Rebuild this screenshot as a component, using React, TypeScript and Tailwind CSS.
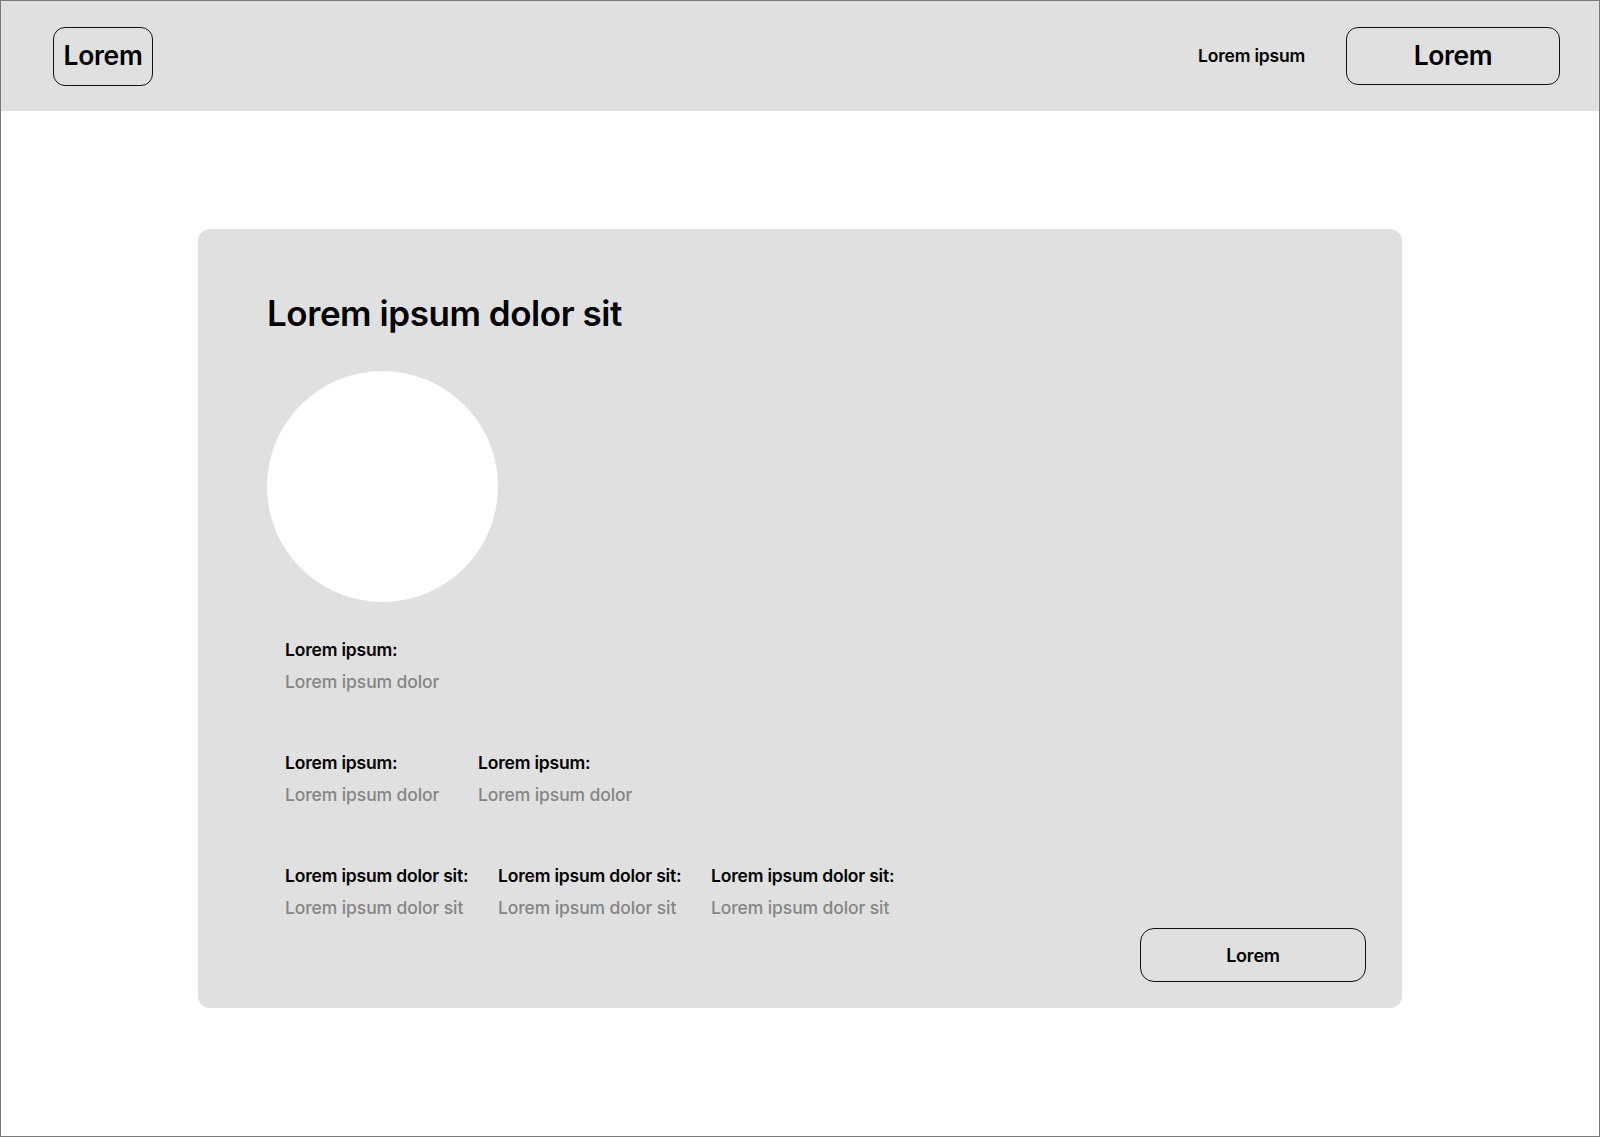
import React from "react";

const font = { fontFamily: "Inter, 'Noto Sans', sans-serif" };

function Field({ label, value, w }: { label: string; value: string; w: string }) {
  return (
    <div className={`flex flex-col gap-[12px] ${w}`}>
      <div className="text-[17.5px] leading-[20px] font-semibold text-black tracking-[-0.2px] whitespace-nowrap">{label}</div>
      <div className="text-[17.5px] leading-[20px] font-medium text-[#858585] tracking-[-0.1px] whitespace-nowrap">{value}</div>
    </div>
  );
}

export default function App() {
  return (
    <div style={font} className="w-[1600px] h-[1137px] border border-[#7a7a7a] bg-white flex flex-col text-black">
      <header className="h-[110px] bg-[#e0e0e0] flex items-center justify-between pl-[52px] pr-[39px] shrink-0">
        <div className="w-[100px] h-[59px] border border-[#111] rounded-[12px] flex items-center justify-center text-[26.5px] font-semibold tracking-[-0.3px]">
          Lorem
        </div>
        <div className="flex items-center gap-[41px]">
          <span className="text-[17.5px] font-semibold tracking-[-0.2px]">Lorem ipsum</span>
          <div className="w-[214px] h-[58px] border border-[#111] rounded-[12px] flex items-center justify-center text-[26.5px] font-semibold tracking-[-0.4px]">
            Lorem
          </div>
        </div>
      </header>
      <main className="flex-1 flex justify-center pt-[118px]">
        <section className="w-[1204px] h-[779px] bg-[#e0e0e0] rounded-[12px] pt-[66px] pl-[69px] pr-[36px] pb-[26px] flex flex-col">
          <h1 className="text-[35px] leading-[36px] font-semibold tracking-[-0.45px]">Lorem ipsum dolor sit</h1>
          <div className="mt-[40px] w-[231px] h-[231px] rounded-full bg-white" />
          <div className="mt-[38px] ml-[18px] flex flex-col">
            <div className="flex">
              <Field label="Lorem ipsum:" value="Lorem ipsum dolor" w="w-[193px]" />
            </div>
            <div className="flex mt-[61px]">
              <Field label="Lorem ipsum:" value="Lorem ipsum dolor" w="w-[193px]" />
              <Field label="Lorem ipsum:" value="Lorem ipsum dolor" w="w-[193px]" />
            </div>
            <div className="flex mt-[61px]">
              <Field label="Lorem ipsum dolor sit:" value="Lorem ipsum dolor sit" w="w-[213px]" />
              <Field label="Lorem ipsum dolor sit:" value="Lorem ipsum dolor sit" w="w-[213px]" />
              <Field label="Lorem ipsum dolor sit:" value="Lorem ipsum dolor sit" w="w-[213px]" />
            </div>
          </div>
          <div className="mt-[10px] flex justify-end">
            <div className="w-[226px] h-[54px] border border-[#111] rounded-[14px] flex items-center justify-center text-[18px] font-semibold tracking-[-0.2px]">
              Lorem
            </div>
          </div>
        </section>
      </main>
    </div>
  );
}
